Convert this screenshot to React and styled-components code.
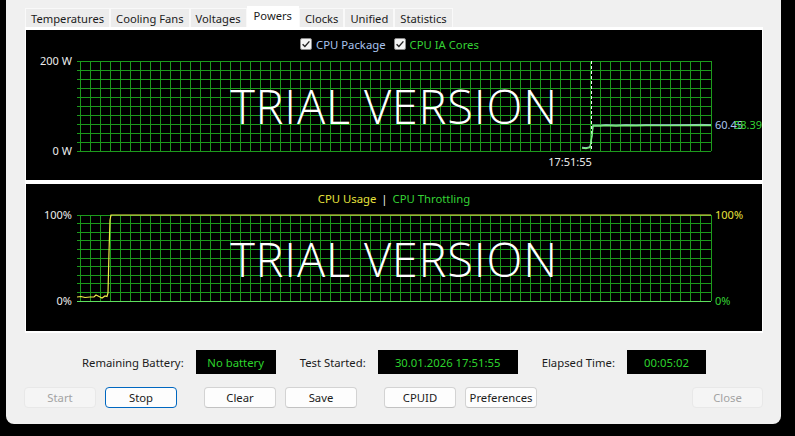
import styled, { createGlobalStyle } from 'styled-components';

const GlobalStyle = createGlobalStyle`
  html, body {
    margin: 0;
    background: #000;
  }
  body {
    font-family: 'Noto Sans', 'Open Sans', sans-serif;
  }
`;

const tabs = ['Temperatures', 'Cooling Fans', 'Voltages', 'Powers', 'Clocks', 'Unified', 'Statistics'];

// 그리드 선 (세로 64개, 가로 10칸)
const Grid = ({ top, bottom, left = 51, right = 685 }) => {
  const vx = [];
  for (let i = 0; i < 64; i++) vx.push(54 + (i * 631) / 63);
  const hy = [];
  for (let i = 0; i <= 10; i++) hy.push(top + ((bottom - top) * i) / 10);
  return (
    <g stroke="#1c9a1c" strokeWidth="1" shapeRendering="crispEdges">
      {vx.map((x) => (
        <line key={`v${x}`} x1={x} y1={top} x2={x} y2={bottom} />
      ))}
      {hy.map((y) => (
        <line key={`h${y}`} x1={left} y1={y} x2={right} y2={y} />
      ))}
    </g>
  );
};

const CheckBox = () => (
  <svg width="12" height="12" viewBox="0 0 12 12">
    <rect x="0.5" y="0.5" width="11" height="11" rx="1.5" fill="#f4f4f4" stroke="#8a8a8a" />
    <path d="M2.6 6.2 L4.9 8.5 L9.4 3.4" fill="none" stroke="#222" strokeWidth="1.4" />
  </svg>
);

const toPoints = (pts) => pts.map(([x, y]) => `${x},${y}`).join(' ');

const powerLine = [
  [556, 90], [560, 90.5], [564, 89.5], [566, 78], [567, 68], [574, 68], [580, 67.5],
  [590, 68], [600, 67.5], [610, 67.8], [620, 67.5], [640, 67.6], [660, 67.5], [675, 67.2], [685, 67.5]
];

const usageLine = [
  [51, 85], [55, 84.5], [59, 85.5], [64, 85], [68, 85], [70, 83], [73, 84.5], [76, 86],
  [79, 84], [81, 84.5], [82, 81], [83, 40], [84, 8], [85, 3], [685, 3]
];

const App = () => {
  return (
    <>
      <GlobalStyle />
      <Window>
        {/* 탭 */}
        <TabStrip>
          {tabs.map((t) => (
            <Tab key={t} $active={t === 'Powers'}>
              {t}
            </Tab>
          ))}
        </TabStrip>

        <TabPage>
          {/* 전력 차트 */}
          <ChartPanel $h={150}>
            <Legend $shift={-9} $gap={8}>
              <LegendItem $color="#a9c4ee">
                <CheckBox />
                CPU Package
              </LegendItem>
              <LegendItem $color="#35d235">
                <CheckBox />
                CPU IA Cores
              </LegendItem>
            </Legend>
            <Plot width="736" height="122" viewBox="0 0 736 122">
              <Grid top={3} bottom={93} />
              <Watermark x="368" y="66">TRIAL VERSION</Watermark>
              <line x1="565.5" y1="3" x2="565.5" y2="93" stroke="#f2f2f2" strokeDasharray="3 2" />
              <polyline points={toPoints(powerLine.map(([x, y]) => [x, y - 0.8]))} fill="none" stroke="#9fb8e0" strokeWidth="1" />
              <polyline points={toPoints(powerLine)} fill="none" stroke="#7cf07c" strokeWidth="1.4" />
              <AxisText x="46" y="7" textAnchor="end">200 W</AxisText>
              <AxisText x="46" y="97" textAnchor="end">0 W</AxisText>
              <AxisText x="544" y="108" textAnchor="middle">17:51:55</AxisText>
              <AxisText x="689" y="71" fill="#a9c4ee">60.45</AxisText>
              <AxisText x="708" y="71" fill="#35d235">58.39</AxisText>
            </Plot>
          </ChartPanel>

          {/* 사용률 차트 */}
          <ChartPanel $h={147}>
            <Legend $gap={5}>
              <LegendItem $color="#e6e23c">CPU Usage</LegendItem>
              <LegendItem $color="#f0f0f0">|</LegendItem>
              <LegendItem $color="#35d235">CPU Throttling</LegendItem>
            </Legend>
            <Plot width="736" height="119" viewBox="0 0 736 119">
              <Grid top={3} bottom={89} />
              <Watermark x="368" y="65">TRIAL VERSION</Watermark>
              <line x1="51" y1="89.5" x2="685" y2="89.5" stroke="#5ee05e" strokeWidth="1.2" />
              <polyline points={toPoints(usageLine)} fill="none" stroke="#eeea4a" strokeWidth="1.2" />
              <AxisText x="46" y="7" textAnchor="end">100%</AxisText>
              <AxisText x="46" y="93" textAnchor="end">0%</AxisText>
              <AxisText x="689" y="7" fill="#e6e23c">100%</AxisText>
              <AxisText x="689" y="93" fill="#35d235">0%</AxisText>
            </Plot>
          </ChartPanel>
        </TabPage>

        {/* 상태 정보 */}
        <InfoRow>
          <Field>
            <InfoLabel>Remaining Battery:</InfoLabel>
            <InfoBox $w={80}>No battery</InfoBox>
          </Field>
          <Field>
            <InfoLabel>Test Started:</InfoLabel>
            <InfoBox $w={140}>30.01.2026 17:51:55</InfoBox>
          </Field>
          <Field>
            <InfoLabel>Elapsed Time:</InfoLabel>
            <InfoBox $w={79}>00:05:02</InfoBox>
          </Field>
        </InfoRow>

        {/* 버튼 */}
        <ButtonRow>
          <ButtonGroup>
            <Button disabled>Start</Button>
            <Button $focused>Stop</Button>
          </ButtonGroup>
          <ButtonGroup>
            <Button>Clear</Button>
            <Button>Save</Button>
          </ButtonGroup>
          <ButtonGroup>
            <Button>CPUID</Button>
            <Button>Preferences</Button>
          </ButtonGroup>
          <CloseButton disabled>Close</CloseButton>
        </ButtonRow>
      </Window>
    </>
  );
};

export default App;

const Window = styled.div`
  box-sizing: border-box;
  width: 775px;
  height: 424px;
  margin-left: 6px;
  padding: 0 18px 0 19px;
  background: #f0f0f0;
  border-radius: 0 0 8px 8px;
  display: flex;
  flex-direction: column;
`;

const TabStrip = styled.div`
  display: flex;
  align-items: flex-end;
  height: 27px;
`;

const Tab = styled.div`
  box-sizing: border-box;
  height: ${({ $active }) => ($active ? '21px' : '19px')};
  padding: ${({ $active }) => ($active ? '0 6px 3px' : '0 5px 0')};
  display: flex;
  align-items: center;
  background: ${({ $active }) => ($active ? '#ffffff' : '#ececec')};
  border: 1px solid ${({ $active }) => ($active ? '#ffffff' : '#f9f9f9')};
  border-bottom: none;
  font-size: 11.2px;
  color: #1b1b1b;
  white-space: nowrap;
`;

const TabPage = styled.div`
  display: flex;
  flex-direction: column;
  gap: 4px;
  padding: 3px 1px 2px;
  background: #ffffff;
`;

const ChartPanel = styled.div`
  height: ${({ $h }) => $h}px;
  background: #000;
  display: flex;
  flex-direction: column;
  overflow: hidden;
`;

const Legend = styled.div`
  height: 28px;
  flex-shrink: 0;
  display: flex;
  justify-content: center;
  align-items: center;
  gap: ${({ $gap }) => $gap}px;
  padding-left: ${({ $shift = 0 }) => ($shift < 0 ? 0 : $shift)}px;
  padding-right: ${({ $shift = 0 }) => ($shift < 0 ? -$shift : 0)}px;
  font-size: 11.3px;
`;

const LegendItem = styled.span`
  display: flex;
  align-items: center;
  gap: 4px;
  color: ${({ $color }) => $color};
`;

const Plot = styled.svg`
  display: block;
  overflow: visible;
  flex-shrink: 0;
`;

const AxisText = styled.text`
  font-family: 'Noto Sans', 'Open Sans', sans-serif;
  font-size: 11px;
  fill: ${({ fill }) => fill || '#ececec'};
`;

const Watermark = styled.text`
  font-family: 'Open Sans', 'Noto Sans', sans-serif;
  font-size: 47px;
  font-weight: 300;
  letter-spacing: 0.8px;
  fill: #ffffff;
  text-anchor: middle;
`;

const InfoRow = styled.div`
  display: flex;
  justify-content: center;
  align-items: center;
  gap: 24px;
  height: 24px;
  margin-top: 17px;
`;

const Field = styled.div`
  display: flex;
  align-items: center;
  gap: 12px;
`;

const InfoLabel = styled.span`
  font-size: 11.3px;
  color: #1b1b1b;
`;

const InfoBox = styled.div`
  width: ${({ $w }) => $w}px;
  height: 24px;
  background: #000;
  color: #2dd42d;
  font-size: 11.3px;
  display: flex;
  align-items: center;
  justify-content: center;
`;

const ButtonRow = styled.div`
  display: flex;
  gap: 27px;
  margin-top: 13px;
  margin-left: -1px;
`;

const ButtonGroup = styled.div`
  display: flex;
  gap: 9px;
`;

const Button = styled.button`
  box-sizing: border-box;
  width: 72px;
  height: 21px;
  padding: 0;
  font-family: 'Noto Sans', 'Open Sans', sans-serif;
  font-size: 11.3px;
  color: #1b1b1b;
  background: #fdfdfd;
  border: 1px solid ${({ $focused }) => ($focused ? '#0067c0' : '#d3d3d3')};
  border-bottom-color: ${({ $focused }) => ($focused ? '#0067c0' : '#c2c2c2')};
  border-radius: 4px;

  &:disabled {
    color: #a3a3a3;
    background: #f5f5f5;
    border-color: #e8e8e8;
  }
`;

const CloseButton = styled(Button)`
  margin-left: auto;
  width: 71px;
`;
